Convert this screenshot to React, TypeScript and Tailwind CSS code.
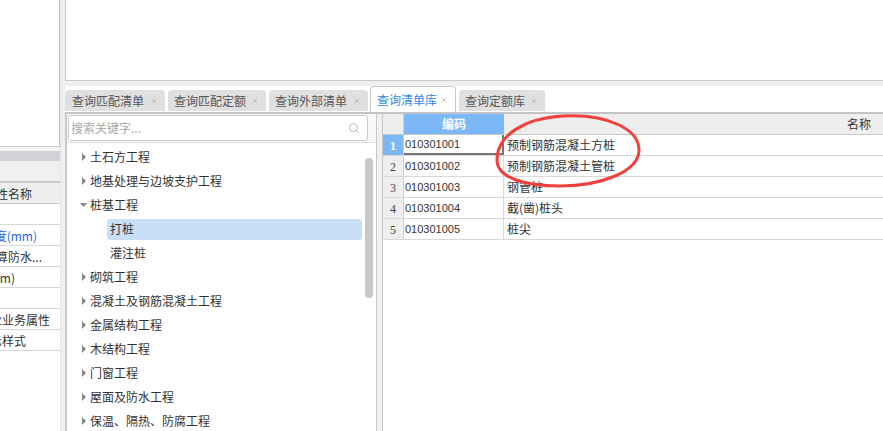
import { Search, X } from 'lucide-react';

const cjk = { fontFamily: '"Noto Sans CJK SC", "Liberation Sans", sans-serif' };

const leftRows = [
  { text: '', cls: 'pr-[28px]' },
  { text: '厚度(mm)', cls: 'pr-[23px] text-[#2563eb]' },
  { text: '计算防水...', cls: 'pr-[18px]' },
  { text: '高度(mm)', cls: 'pr-[45px]' },
  { text: '', cls: 'pr-[28px]' },
  { text: '专业业务属性', cls: 'pr-[10px]' },
  { text: '显示样式', cls: 'pr-[34px]' },
];

const tabs = [
  { name: '查询匹配清单', w: 'w-[100px] pl-[7px]' },
  { name: '查询匹配定额', w: 'w-[98px] pl-[6px]' },
  { name: '查询外部清单', w: 'w-[99px] pl-[6px]' },
  { name: '查询清单库', w: 'w-[86px] -ml-[1px] pl-[6px]', active: true },
  { name: '查询定额库', w: 'w-[86px] pl-[6px]' },
];

const tree = [
  { name: '土石方工程' },
  { name: '地基处理与边坡支护工程' },
  { name: '桩基工程', open: true },
  { name: '打桩', child: true, selected: true },
  { name: '灌注桩', child: true },
  { name: '砌筑工程' },
  { name: '混凝土及钢筋混凝土工程' },
  { name: '金属结构工程' },
  { name: '木结构工程' },
  { name: '门窗工程' },
  { name: '屋面及防水工程' },
  { name: '保温、隔热、防腐工程' },
];

const rows = [
  { code: '010301001', name: '预制钢筋混凝土方桩' },
  { code: '010301002', name: '预制钢筋混凝土管桩' },
  { code: '010301003', name: '钢管桩' },
  { code: '010301004', name: '截(凿)桩头' },
  { code: '010301005', name: '桩尖' },
];

function LeftColumn() {
  return (
    <div className="w-[61px] shrink-0 h-full flex flex-col bg-[#f4f4f4] border-r border-[#e4e4e4] overflow-hidden">
      <div className="h-[147px] shrink-0 bg-white border-r border-b border-[#c8c8c8]" />
      <div className="h-[4px] shrink-0" />
      <div className="h-[10px] shrink-0 bg-[#d0d2d8]" />
      <div className="h-[22px] shrink-0 bg-[#f0f0f0] border-b-2 border-[#c8c8c8]" />
      <div className="flex-1 bg-white">
        <div className="h-[21px] flex justify-end items-center pt-[2px] pr-[28px] bg-[#eeeeee] border-b border-[#c8c8c8] whitespace-nowrap text-[12px] text-[#333]">
          属性名称
        </div>
        {leftRows.map((r, i) => (
          <div
            key={i}
            className={`h-[21px] flex justify-end items-center pt-[1px] border-b border-[#d8d8d8] whitespace-nowrap text-[12px] text-[#333] ${r.cls}`}
          >
            {r.text}
          </div>
        ))}
      </div>
    </div>
  );
}

function TabBar() {
  return (
    <div className="h-[26px] shrink-0 bg-white flex items-end gap-[3px]">
      {tabs.map(t => (
        <div
          key={t.name}
          className={`${t.w} shrink-0 flex items-center justify-between pr-[7px] rounded-t-[4px] text-[12px] whitespace-nowrap ${
            t.active
              ? 'h-[26px] bg-white text-[#2e8ae6] border border-b-0 border-[#c8c8c8]'
              : 'h-[21px] mb-[1px] bg-[#e0e0e0] text-[#555]'
          }`}
        >
          <span>{t.name}</span>
          <X size={8} strokeWidth={1.8} className="text-[#a0a0a0]" />
        </div>
      ))}
    </div>
  );
}

function TreePanel() {
  return (
    <div className="relative w-[312px] shrink-0 h-full flex flex-col border-l-2 border-r border-[#c8c8c8] bg-white overflow-hidden">
      <div className="h-[29px] shrink-0 pl-[1px] pt-[1px] border-b border-[#e0e0e0] bg-[#f8f8f8]">
        <div className="w-[300px] h-[26px] flex items-center justify-between pl-[2px] pr-[7px] bg-white border border-[#cccccc] rounded-[3px] text-[12px] text-[#a8a8a8]">
          <span>搜索关键字...</span>
          <Search size={12} strokeWidth={1.6} className="text-[#aaa]" />
        </div>
      </div>
      <div className="pt-[2px]">
        {tree.map(item => (
          <div key={item.name} className="h-[24px] flex items-center text-[12px] text-[#333]">
            {item.child ? (
              <div
                className={`ml-[40px] w-[255px] h-[21px] flex items-center pl-[3px] rounded-[3px] ${
                  item.selected ? 'bg-[#c8dff8]' : ''
                }`}
              >
                {item.name}
              </div>
            ) : (
              <>
                <svg width="8" height="8" viewBox="0 0 8 8" className="ml-[13px] mr-[2px] shrink-0">
                  {item.open ? (
                    <path d="M0 2 L7 2 L3.5 6 Z" fill="#888" />
                  ) : (
                    <path d="M2 0 L6 4 L2 8 Z" fill="#888" />
                  )}
                </svg>
                <span>{item.name}</span>
              </>
            )}
          </div>
        ))}
      </div>
      {/* scrollbar thumb */}
      <div className="absolute left-[298px] top-[44px] w-[8px] h-[140px] rounded-[4px] bg-[#c8c8c8]" />
    </div>
  );
}

function Grid() {
  return (
    <div className="flex-1 min-w-0 h-full bg-white border-l border-[#c8c8c8] text-[12px] text-[#333]">
      <div className="h-[21px] flex bg-[#eeeeee] border-b border-[#c8c8c8]">
        <div className="w-[21px] shrink-0 border-r border-[#d0d0d0]" />
        <div className="w-[100px] shrink-0 flex items-center justify-center bg-[#7cb7f7] text-white font-bold">
          编码
        </div>
        <div className="flex-1 flex items-center justify-end pr-[12px]">名称</div>
      </div>
      {rows.map((r, i) => (
        <div key={r.code} className="h-[21px] flex border-b border-[#d8d8d8]">
          <div
            className={`w-[21px] shrink-0 flex items-center justify-center pt-[1px] border-r border-[#d0d0d0] ${
              i === 0 ? 'bg-[#7cb7f7] text-white font-bold' : 'bg-[#eeeeee] text-[#444]'
            }`}
            style={{ fontFamily: '"Liberation Serif", serif' }}
          >
            {i + 1}
          </div>
          <div
            className={`w-[100px] shrink-0 flex items-center pl-[1px] text-[11px] border-r ${
              i === 0 ? 'border-r-2 border-b-2 border-[#777]' : 'border-[#d8d8d8]'
            }`}
            style={{ fontFamily: '"Liberation Sans", sans-serif' }}
          >
            {r.code}
          </div>
          <div className="flex-1 flex items-center pl-[3px]">{r.name}</div>
        </div>
      ))}
    </div>
  );
}

export default function App() {
  return (
    <div className="relative w-[883px] h-[431px] flex bg-[#f0f0f0] overflow-hidden" style={cjk}>
      <LeftColumn />
      <div className="ml-[4px] flex-1 min-w-0 h-full flex flex-col">
        <div className="h-[81px] shrink-0 bg-white border-l border-b border-[#c8c8c8]" />
        <div className="h-[5px] shrink-0" />
        <TabBar />
        <div className="h-[2px] shrink-0 bg-[#c4c4c8]" />
        <div className="flex-1 min-h-0 flex bg-[#f0f0f0]">
          <TreePanel />
          <div className="w-[5px] shrink-0" />
          <Grid />
        </div>
      </div>
      {/* red hand-drawn annotation */}
      <svg width="883" height="431" className="absolute left-0 top-0 pointer-events-none">
        <path
          d="M563 116 C610 114 639 130 639 150 C639 172 600 186 560 186 C525 186 497 178 497 160 C497 135 525 118 563 116 Z"
          fill="none"
          stroke="#f2403c"
          strokeWidth="3"
        />
      </svg>
    </div>
  );
}
